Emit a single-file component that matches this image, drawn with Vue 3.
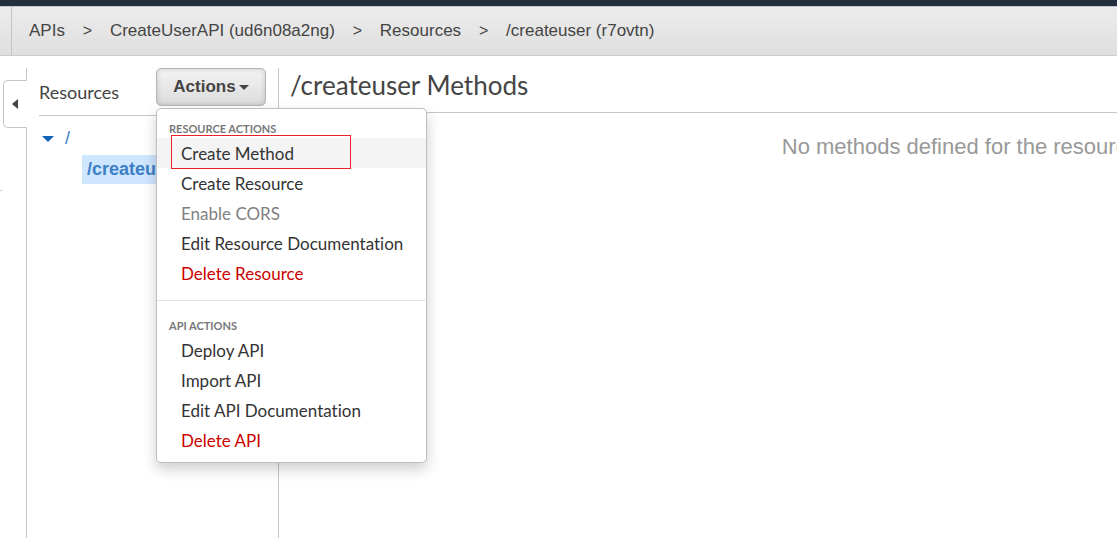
<script setup>
const crumbs = ['APIs', 'CreateUserAPI (ud6n08a2ng)', 'Resources', '/createuser (r7ovtn)']

const groups = [
  {
    title: 'RESOURCE ACTIONS',
    items: [
      { label: 'Create Method', active: true },
      { label: 'Create Resource' },
      { label: 'Enable CORS', disabled: true },
      { label: 'Edit Resource Documentation' },
      { label: 'Delete Resource', danger: true },
    ],
  },
  {
    title: 'API ACTIONS',
    items: [
      { label: 'Deploy API' },
      { label: 'Import API' },
      { label: 'Edit API Documentation' },
      { label: 'Delete API', danger: true },
    ],
  },
]
</script>

<template>
  <div class="console">
    <header class="topbar"></header>
    <nav class="crumbs" aria-label="Breadcrumb">
      <div class="crumb-edge"></div>
      <ol>
        <li v-for="(c, i) in crumbs" :key="c">
          <span v-if="i" class="sep">&gt;</span>
          <a href="#">{{ c }}</a>
        </li>
      </ol>
    </nav>

    <div class="workspace">
      <div class="gutter">
        <button class="collapse" type="button" aria-label="Collapse sidebar">
          <svg width="6" height="10" viewBox="0 0 6 10"><path d="M6 0V10L0 5Z" fill="#444" /></svg>
        </button>
        <div class="tick"></div>
      </div>

      <aside class="sidebar">
        <div class="side-head">
          <h2>Resources</h2>
          <div class="dropdown">
            <button class="actions" type="button" aria-haspopup="menu" aria-expanded="true">
              Actions
              <svg width="10" height="5" viewBox="0 0 10 5"><path d="M0 0H10L5 5Z" fill="#444" /></svg>
            </button>
            <div class="menu" role="menu">
              <section v-for="g in groups" :key="g.title">
                <h3>{{ g.title }}</h3>
                <button
                  v-for="item in g.items"
                  :key="item.label"
                  type="button"
                  role="menuitem"
                  class="item"
                  :class="{ active: item.active, danger: item.danger }"
                  :disabled="item.disabled"
                >
                  {{ item.label }}
                  <span v-if="item.active" class="marker"></span>
                </button>
              </section>
            </div>
          </div>
        </div>

        <div class="tree">
          <div class="root">
            <svg width="12" height="6" viewBox="0 0 12 6"><path d="M0 0H12L6 6Z" fill="#1166bb" /></svg>
            <a href="#">/</a>
          </div>
          <a href="#" class="node">/createuser</a>
        </div>
      </aside>

      <main>
        <h1>/createuser Methods</h1>
        <p>No methods defined for the resource.</p>
      </main>
    </div>
  </div>
</template>

<style>
body {
  margin: 0;
  background: #fff;
}
</style>

<style scoped>
* {
  box-sizing: border-box;
}

.console {
  display: flex;
  flex-direction: column;
  min-height: 100vh;
  overflow: hidden;
  color: #444;
  font-family: "Liberation Sans", Arial, sans-serif;
  font-variant-ligatures: none;
}

a {
  color: inherit;
  text-decoration: none;
}

button {
  font: inherit;
  color: inherit;
  cursor: pointer;
}

.topbar {
  height: 6px;
  background: #232f3e;
}

.crumbs {
  display: flex;
  height: 50px;
  border-top: 1px solid #c8c4cf;
  border-bottom: 1px solid #ccc;
  background: linear-gradient(#ececec, #dfdfdf);
}

.crumb-edge {
  width: 12px;
  border-right: 1px solid #c4c4c4;
}

.crumbs ol {
  display: flex;
  align-items: center;
  margin: 0;
  padding: 0 17px;
  list-style: none;
  font-size: 17px;
  line-height: 20px;
  white-space: nowrap;
}

.crumbs li {
  display: flex;
}

.sep {
  width: 45px;
  text-align: center;
  font-size: 16px;
}

.workspace {
  display: flex;
  flex: 1;
  padding-top: 12px;
}

.gutter {
  flex: none;
  width: 27px;
  padding: 12px 0 0 3px;
  border-right: 1px solid #c6c6c6;
}

.collapse {
  display: flex;
  align-items: center;
  width: 24px;
  height: 48px;
  padding: 0 0 0 8px;
  border: 1px solid #c6c6c6;
  border-right: 0;
  border-radius: 5px 0 0 5px;
  background: #fff;
}

.tick {
  width: 2px;
  height: 1px;
  margin: 62px 0 0 -3px;
  background: #c6c6c6;
}

.sidebar {
  flex: none;
  width: 252px;
  padding-left: 12px;
  border-right: 1px solid #c6c6c6;
}

.side-head {
  display: flex;
  justify-content: space-between;
  height: 48px;
  padding-right: 12px;
  border-bottom: 1px solid #c6c6c6;
}

h2 {
  margin: 0;
  font-family: Lato, sans-serif;
  font-size: 18px;
  font-weight: 400;
  line-height: 48px;
}

.dropdown {
  position: relative;
}

.actions {
  display: flex;
  align-items: center;
  justify-content: center;
  gap: 3px;
  width: 110px;
  height: 38px;
  padding: 0;
  border: 1px solid #b5b5b5;
  border-radius: 5px;
  background: linear-gradient(#f3f3f3, #dcdcdc);
  box-shadow: inset 0 0 5px rgba(0, 0, 0, 0.16);
  font-size: 17px;
  font-weight: 700;
}

.menu {
  position: absolute;
  top: 40px;
  left: 0;
  z-index: 2;
  width: 271px;
  padding: 10px 0 7px;
  border: 1px solid #bfbfbf;
  border-radius: 5px;
  background: #fff;
  box-shadow: 0 6px 14px rgba(0, 0, 0, 0.2);
  font-family: Lato, sans-serif;
}

.menu section + section {
  margin-top: 12px;
  padding-top: 15px;
  border-top: 1px solid #e2e2e2;
}

h3 {
  margin: 0;
  padding-left: 12px;
  color: #777;
  font-size: 11px;
  font-weight: 700;
  line-height: 19px;
}

.item {
  display: block;
  position: relative;
  width: 100%;
  height: 30px;
  padding: 1px 0 0 24px;
  border: 0;
  background: none;
  color: #333;
  font-size: 17px;
  line-height: 30px;
  text-align: left;
}

.item.active {
  background: #f4f4f4;
}

.item:disabled {
  color: #808080;
}

.item.danger {
  color: #c00;
}

.marker {
  position: absolute;
  top: -3px;
  left: 14px;
  width: 180px;
  height: 34px;
  border: 1px solid #e8202a;
}

.tree {
  color: #3c7fc6;
  font-size: 18px;
}

.root {
  display: flex;
  align-items: center;
  gap: 11px;
  height: 39px;
  padding: 6px 0 0 3px;
}

.node {
  display: block;
  width: 120px;
  margin-left: 43px;
  padding-left: 5px;
  background: #cfe6ff;
  font-weight: 700;
  line-height: 28px;
  padding-bottom: 1px;
}

main {
  flex: 1;
  min-width: 0;
}

h1 {
  margin: 0;
  padding: 0 11px 10px;
  border-bottom: 1px solid #c6c6c6;
  font-family: Lato, sans-serif;
  font-size: 26px;
  font-weight: 400;
  line-height: 34px;
}

main p {
  margin: 20px 0 0;
  padding-left: 60%;
  overflow: hidden;
  color: #999;
  font-size: 22px;
  line-height: 28px;
  white-space: nowrap;
}
</style>
